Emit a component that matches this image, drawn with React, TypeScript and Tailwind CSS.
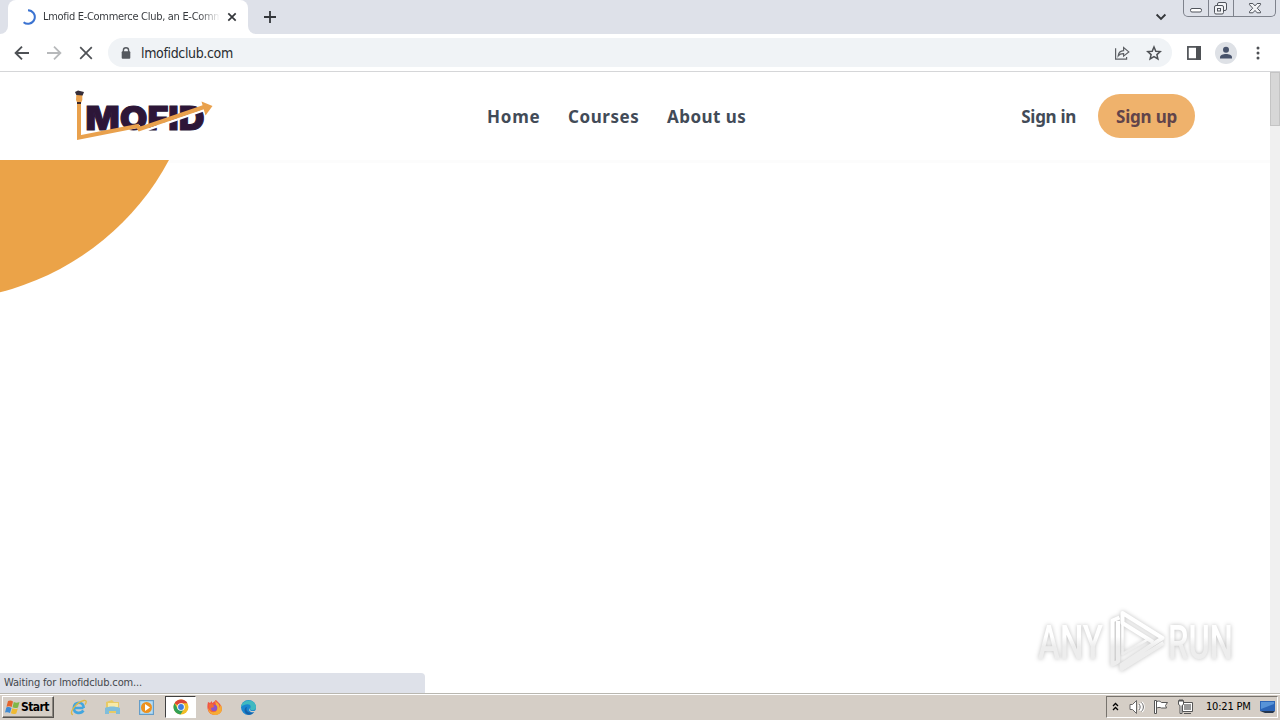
import { ReactNode } from "react";

const navLinks = [
  { label: "Home", className: "w-[81px] tracking-[0.75px]" },
  { label: "Courses", className: "w-[99px] tracking-[0.55px]" },
  { label: "About us", className: "tracking-[0.45px]" },
];

function TabStrip() {
  return (
    <div className="flex h-[34px] bg-[#dee1e9]">
      <div className="flex w-2 items-end bg-white">
        <div className="h-full w-full rounded-br-lg bg-[#dee1e9]" />
      </div>
      <div className="flex w-60 items-center rounded-t-lg bg-white pl-3">
        <svg width="16" height="16" viewBox="0 0 16 16" fill="none">
          <path d="M8 1.2a6.8 6.8 0 1 1-4.400 12" stroke="#3b73d1" strokeWidth="2" />
        </svg>
        <div className="ml-[7px] w-[177px] overflow-hidden bg-gradient-to-r from-[#34373b] from-88% to-transparent bg-clip-text font-['DejaVu_Sans_Condensed','DejaVu_Sans',sans-serif] text-[11px] tracking-[-0.3px] whitespace-nowrap text-transparent">
          Lmofid E-Commerce Club, an E-Comm
        </div>
        <svg className="ml-[7px]" width="10" height="10" viewBox="0 0 10 10">
          <path d="M1.3 1.3l7.4 7.4M8.7 1.3L1.3 8.7" stroke="#34373b" strokeWidth="1.7" />
        </svg>
      </div>
      <div className="w-2 bg-white">
        <div className="h-full w-full rounded-bl-lg bg-[#dee1e9]" />
      </div>
      <svg className="mt-[11px] ml-2" width="12" height="12" viewBox="0 0 12 12">
        <path d="M6 0v12M0 6h12" stroke="#34373b" strokeWidth="1.8" />
      </svg>
      <svg className="mt-3 ml-auto" width="12" height="10" viewBox="0 0 12 10" fill="none">
        <path d="M1.6 2.5L6 6.9l4.4-4.4" stroke="#34373b" strokeWidth="1.9" />
      </svg>
      <WindowButtons />
    </div>
  );
}

function WindowButtons() {
  return (
    <div className="mr-[4px] ml-4 flex h-[17px] w-[93px] rounded-b-[5px] border border-t-0 border-[#7e828c] text-[#50545c]">
      <div className="w-[25px] border-r border-[#7e828c]">
        <svg width="24" height="16" viewBox="0 0 24 16" fill="white" stroke="currentColor">
          <rect x="6.5" y="8.5" width="11" height="3.5" rx="1.5" />
        </svg>
      </div>
      <div className="w-[25px] border-r border-[#7e828c]">
        <svg width="24" height="16" viewBox="0 0 24 16" fill="#f2f3f6" stroke="currentColor">
          <rect x="8.5" y="2.5" width="9" height="8" rx="1.5" />
          <rect x="5.5" y="5.5" width="9" height="8.5" rx="1.5" />
          <rect x="8.5" y="8.5" width="3" height="2.5" />
        </svg>
      </div>
      <svg width="41" height="16" viewBox="0 0 41 16" fill="#f2f3f6" stroke="currentColor">
        <path d="M15.5 3.5h3.4l2.1 2.4 2.1-2.4h3.4v1.2l-3.2 3.5 3.2 3.4v1.2h-3.4L21 10.4l-2.1 2.4h-3.4v-1.2l3.2-3.4-3.2-3.5z" />
      </svg>
    </div>
  );
}

function Toolbar() {
  return (
    <div className="flex h-[38px] items-center border-b border-[#d5d6d8] bg-white pl-[14px]">
      <svg width="16" height="16" viewBox="0 0 16 16" fill="none" stroke="#4e5155" strokeWidth="1.9">
        <path d="M15 8H2M8 1.6L1.6 8 8 14.4" />
      </svg>
      <svg className="ml-4" width="16" height="16" viewBox="0 0 16 16" fill="none" stroke="#b7b9bb" strokeWidth="1.8">
        <path d="M1 8h13M8 1.6L14.4 8 8 14.4" />
      </svg>
      <svg className="ml-4" width="16" height="16" viewBox="0 0 16 16" fill="none" stroke="#4e5155" strokeWidth="1.7">
        <path d="M2.2 2.2l11.6 11.6M13.8 2.2L2.2 13.8" />
      </svg>
      <div className="ml-[14px] flex h-[29px] w-[1064px] items-center rounded-full bg-[#f0f3f6] pl-[13px]">
        <svg width="10" height="12" viewBox="0 0 10 12">
          <path d="M2.4 5V3.3a2.6 2.6 0 0 1 5.2 0V5" fill="none" stroke="#55595f" strokeWidth="1.4" />
          <rect x="0.7" y="4.3" width="8.6" height="7.4" rx="1" fill="#55595f" />
        </svg>
        <span className="ml-[10px] pt-px font-['DejaVu_Sans_Condensed','DejaVu_Sans',sans-serif] text-[14px] tracking-[-0.35px] text-[#292c30]">
          lmofidclub.com
        </span>
        <svg className="ml-auto" width="16" height="16" viewBox="0 0 16 16" fill="none" stroke="#5d6065" strokeWidth="1.2">
          <path d="M1.6 3.200v10.900h11v-2" />
          <path d="M4.2 10.9c.4-3.4 2.2-5 5.4-5.2V2.600l5.200 4.300-5.200 4.200V8.700c-2.500-.1-4.100.5-5.400 2.200z" />
        </svg>
        <svg className="mr-[10px] ml-4" width="16" height="16" viewBox="0 0 16 16" fill="none" stroke="#4e5155" strokeWidth="1.5">
          <path d="M8 2l1.800 4.200 4.500.4-3.400 3 1 4.400L8 11.700 4.100 14l1-4.400-3.400-3 4.500-.4z" />
        </svg>
      </div>
      <svg className="ml-[15px]" width="14" height="14" viewBox="0 0 14 14">
        <rect x="0.9" y="0.9" width="12.200" height="12.200" fill="white" stroke="#4e5155" strokeWidth="1.700" />
        <path d="M9 0h5v14H9z" fill="#4e5155" />
      </svg>
      <svg className="ml-[14px]" width="22" height="22" viewBox="0 0 22 22">
        <circle cx="11" cy="11" r="11" fill="#dee1e6" />
        <circle cx="11" cy="7.700" r="3" fill="#48536b" />
        <path d="M5 16.500v-1.300c0-2 3.200-3.200 6-3.200s6 1.200 6 3.200v1.300z" fill="#48536b" />
      </svg>
      <svg className="ml-[19px]" width="4" height="14" viewBox="0 0 4 14" fill="#4e5155">
        <circle cx="2" cy="2" r="1.500" />
        <circle cx="2" cy="7" r="1.500" />
        <circle cx="2" cy="12" r="1.500" />
      </svg>
    </div>
  );
}

function Logo() {
  return (
    <svg width="138" height="52" viewBox="0 0 138 52">
      <text
        x="10.500"
        y="39.500"
        fontFamily="Inter, sans-serif"
        fontWeight="900"
        fontSize="33"
        textLength="119"
        lengthAdjust="spacingAndGlyphs"
        fill="#2d1638"
        stroke="#2d1638"
        strokeWidth="1"
      >
        MOFID
      </text>
      <path d="M10 47.500l54-11 2 5.500 66-23" fill="none" stroke="white" strokeWidth="2.500" />
      <path d="M4 12v35.500l58.500-11.500 2 3 66-22.500" fill="none" stroke="#e9a14d" strokeWidth="4" />
      <path d="M126.500 11.500l11 4.500-7 9.500z" fill="#e9a14d" />
      <path d="M1.300 5h6v5L6 13H2.300L1 10z" fill="#e9a14d" />
      <path d="M0 2l3-1.500L9 2 7.600 5.500 1.300 5z" fill="#352d38" />
      <path d="M2 12h4v2H2z" fill="#38272b" />
    </svg>
  );
}

function Header() {
  return (
    <header className="flex h-22 items-center bg-white pr-[75px] pl-[75px] font-['Noto_Sans',sans-serif] text-[17px] font-bold text-[#424b57]">
      <Logo />
      <nav className="ml-[274px] flex pt-0.5">
        {navLinks.map((link) => (
          <a key={link.label} className={link.className}>
            {link.label}
          </a>
        ))}
      </nav>
      <div className="ml-auto flex items-center">
        <a className="mr-[22px] pt-0.5 tracking-[-0.3px]">Sign in</a>
        <a className="flex h-11 w-[97px] items-center justify-center rounded-full bg-[#efb26c] pt-0.5 tracking-[-0.2px] text-[#61444a]">
          Sign up
        </a>
      </div>
    </header>
  );
}

function Watermark() {
  return (
    <svg
      className="absolute right-[35px] bottom-[20px] overflow-visible drop-shadow-[0_0_2px_rgba(0,0,0,0.25)]"
      width="202"
      height="66"
      viewBox="0 0 202 66"
      fill="none"
    >
      <defs>
        <linearGradient id="fade" gradientUnits="userSpaceOnUse" x1="0" y1="0" x2="0" y2="66">
          <stop offset="0.45" stopColor="#ffffff" />
          <stop offset="0.6" stopColor="#ededed" />
        </linearGradient>
      </defs>
      <g fill="url(#fade)" fontFamily="Roboto, sans-serif" fontSize="49" fontWeight="500">
        <text x="5" y="51.500" textLength="65" lengthAdjust="spacingAndGlyphs">
          ANY
        </text>
        <text x="135" y="51.500" textLength="65" lengthAdjust="spacingAndGlyphs">
          RUN
        </text>
      </g>
      <g stroke="url(#fade)" strokeWidth="4" strokeLinejoin="round">
        <path d="M86.500 10.500l-7 3v44l5.500-3V14" />
        <path d="M120 35L89.500 16V6l40 25-41 27v4l42-26" />
        <path d="M89.500 15v32l26-15" strokeWidth="2.500" />
      </g>
    </svg>
  );
}

function Page() {
  return (
    <div className="flex h-[621px]">
      <main className="relative flex w-[1270px] flex-col bg-white">
        <Header />
        <svg width="1270" height="533" viewBox="0 160 1270 533">
          <path d="M0 160h1270v3H0z" fill="#fcfcfc" />
          <circle cx="-65" cy="35" r="265.300" fill="#eba348" />
        </svg>
        <Watermark />
        <div className="absolute bottom-0 left-0 flex h-5 w-[425px] items-center rounded-tr-[4px] bg-[#dee1e9] pt-px pl-1 font-['DejaVu_Sans_Condensed','DejaVu_Sans',sans-serif] text-[11px] tracking-[-0.15px] text-[#44474c]">
          Waiting for lmofidclub.com...
        </div>
      </main>
      <div className="w-[10px] bg-[#f0f0f0]">
        <div className="h-[54px] border border-[#c4c4c4] bg-[#d7d7d7]" />
      </div>
    </div>
  );
}

function TaskIcon({ active, children }: { active?: boolean; children: ReactNode }) {
  return (
    <div
      className={
        active
          ? "flex h-[22px] w-[31px] items-center justify-center border border-t-[#404040] border-r-white border-b-white border-l-[#404040] bg-white"
          : "flex h-[22px] w-[31px] items-center justify-center"
      }
    >
      {children}
    </div>
  );
}

function Taskbar() {
  return (
    <footer className="flex h-[27px] items-center border-t border-[#b9b7b0] bg-[#d5cec6] pl-[2px] shadow-[inset_0_1px_0_white]">
      <div className="flex h-[22px] w-[52px] items-center border border-t-white border-r-[#55524e] border-b-[#55524e] border-l-white pl-px shadow-[inset_-1px_-1px_0_#8c8780]">
        <svg width="17" height="17" viewBox="0 0 17 17">
          <path d="M4 2c2-1 3.500-.5 5 .5L7.700 8C6 7 4.500 7 2.500 7.700z" fill="#e4642c" />
          <path d="M9.800 3c2 1 3.500 1 5.700 0L14 8.500c-2 1-4 .7-5.500-.2z" fill="#80b748" />
          <path d="M2.300 8.600c2-.8 3.600-.6 5.200.3L6 14c-1.600-1-3-1-5-.4z" fill="#408bd3" />
          <path d="M8.300 9.300c2 1 3.500 1 5.500.2l-1.500 5c-2 .9-3.700.7-5.400-.2z" fill="#efba33" />
        </svg>
        <span className="font-['DejaVu_Sans_Condensed','DejaVu_Sans',sans-serif] text-[12px] font-bold tracking-[-0.6px] text-black">
          Start
        </span>
      </div>
      <div className="ml-[9px] flex gap-[3px]">
        <TaskIcon>
          <svg width="17" height="17" viewBox="0 0 17 17" fill="none">
            <path d="M13.500 9H5M13.700 9c0-7-9.900-7-9.900 0 0 6 7.500 6 9.600 2.500" stroke="#42a6df" strokeWidth="2.700" />
            <path d="M3 15.500C-2 15 6 3 14 1.500c3.500-.5 2 3 1 4" stroke="#dfb943" strokeWidth="1.300" />
          </svg>
        </TaskIcon>
        <TaskIcon>
          <svg width="17" height="17" viewBox="0 0 17 17">
            <path d="M2 3l6-2 2 2h5v11H2z" fill="#e7ca66" />
            <path d="M4 4h10v4H4z" fill="#f7eaa8" />
            <path d="M1 9c4-2 10-2 15 0v6h-4v-3H5v3H1z" fill="#80bedb" />
          </svg>
        </TaskIcon>
        <TaskIcon>
          <svg width="17" height="17" viewBox="0 0 17 17">
            <rect x="1.500" y="1.500" width="14" height="14" fill="#8fc3e6" stroke="#659dc8" />
            <rect x="2.500" y="2.500" width="12" height="12" fill="#b8ddf3" />
            <circle cx="8.500" cy="8.500" r="5.500" fill="#ed911f" />
            <path d="M7 5l5 3.500L7 12z" fill="white" />
          </svg>
        </TaskIcon>
        <TaskIcon active>
          <svg width="16" height="16" viewBox="0 0 16 16">
            <circle cx="8" cy="8" r="7.500" fill="#f2bd27" />
            <path d="M8 8L1.500 4.200A7.500 7.500 0 0 1 14.500 4.200H8z" fill="#dc4638" />
            <path d="M1.500 4.200A7.500 7.500 0 0 0 7.500 15.500L11 9.700 4.700 9.700z" fill="#32a056" />
            <circle cx="8" cy="8" r="3.800" fill="white" />
            <circle cx="8" cy="8" r="2.900" fill="#3f7ee0" />
          </svg>
        </TaskIcon>
        <TaskIcon>
          <svg width="17" height="17" viewBox="0 0 17 17">
            <path d="M2 3l2 1 2-2v2c3-1 3-3 4-3l4 4c5 7-1 11-5 11C3 16 0 11 2 3z" fill="#f05545" />
            <path d="M9 1c1 3 6 4 4 8l2-3c3 7-2 10-6 10-5 0-7-4-7-7 1 2 2 3 4 4 8 0 3-8 3-12z" fill="#f6ac35" />
            <circle cx="8" cy="9" r="3.300" fill="#8d55c7" />
            <path d="M3 5c4-1 5 1 5 3L5 9c0 4 4 4 6 2-2 4-9 3-8-6z" fill="#f26b37" />
          </svg>
        </TaskIcon>
        <TaskIcon>
          <svg width="17" height="17" viewBox="0 0 17 17">
            <circle cx="8.500" cy="8.500" r="7.500" fill="#1a86cf" />
            <path d="M1 8C2 0 15-1 16 8c0 4-5 4-6 2 3-6-5-6-9-2z" fill="#40b9c0" />
            <path d="M7 8c-2 4 2 7 7 5-3 4-8 3-9 0-1-2 0-5 2-5z" fill="#1660a8" />
            <path d="M9.500 9c-.5 3 3 4 6.500 2.200l-1 1.800c-4 1-7-1-5.500-4z" fill="#d5cec6" />
          </svg>
        </TaskIcon>
      </div>
      <div className="mr-[2px] ml-auto flex h-[22px] w-[172px] items-center border border-t-[#77736d] border-r-white border-b-white border-l-[#77736d]">
        <svg className="ml-[5px]" width="7" height="10" viewBox="0 0 7 10" fill="none" stroke="black" strokeWidth="1.300">
          <path d="M1 4l2.500-2.500L6 4M1 8l2.500-2.500L6 8" />
        </svg>
        <svg className="ml-[10px]" width="17" height="16" viewBox="0 0 17 16" fill="none" stroke="#686766">
          <path d="M1 5.500h2.500l4-4v13l-4-4H1z" fill="white" />
          <path d="M10 5c1.500 2 1.500 4 0 6M12.500 3.500c2.500 3 2.500 6 0 9" stroke="white" strokeWidth="3" />
          <path d="M10 5c1.500 2 1.500 4 0 6M12.500 3.500c2.500 3 2.500 6 0 9" />
        </svg>
        <svg className="ml-[7px]" width="17" height="16" viewBox="0 0 17 16" fill="white" stroke="#555">
          <path d="M1.500 1.500h2v13h-2zM3.500 2.500c3-1 4 0 5 1h6l-2 3 1 2.500H8.500c-2-1-3-.5-5 0z" />
        </svg>
        <svg className="ml-[7px]" width="17" height="16" viewBox="0 0 17 16" fill="white" stroke="#555">
          <path d="M5.500 3.500h10v9h-10zM7 14.500h7" />
          <path d="M7 5h7v6H7z" fill="#999" stroke="none" />
          <path d="M1.500 1.500h5v4l-1.500 1v8H3v-8l-1.500-1zM3 0v3M5 0v3" />
        </svg>
        <span className="ml-[12px] w-[47px] font-['DejaVu_Sans_Condensed','DejaVu_Sans',sans-serif] text-[11px] tracking-[-0.2px] whitespace-nowrap text-black">
          10:21 PM
        </span>
        <svg className="ml-[7px]" width="16" height="14" viewBox="0 0 16 14">
          <path d="M0 1h15v10H0z" fill="#2c65b7" />
          <path d="M1 2h13v2L1 9z" fill="#5793d8" />
          <path d="M0 11h15l-2 2H5z" fill="#24364e" />
        </svg>
      </div>
    </footer>
  );
}

export default function App() {
  return (
    <div className="h-[720px] w-[1280px] overflow-hidden bg-white">
      <TabStrip />
      <Toolbar />
      <Page />
      <Taskbar />
    </div>
  );
}
